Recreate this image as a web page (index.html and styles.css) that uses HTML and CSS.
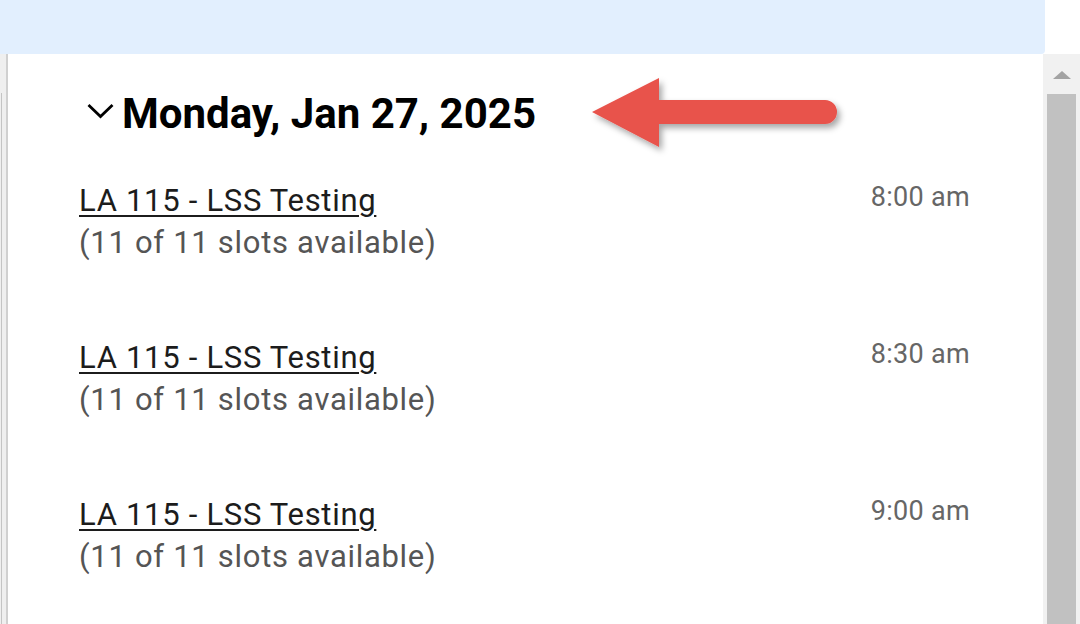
FILE: index.html
```html
<!DOCTYPE html>
<html>
<head>
<meta charset="utf-8">
<link rel="stylesheet" href="styles.css">
</head>
<body>
<div class="page">
  <div class="topbar-row">
    <div class="topbar"></div>
  </div>
  <div class="main">
    <div class="leftedge"><div class="edge-line"></div></div>
    <div class="content">
      <div class="day-header">
        <svg class="chevron" width="27" height="16" viewBox="0 0 27 16"><path d="M1.5 2 L13.5 13.5 L25.5 2" fill="none" stroke="#000" stroke-width="2.8"/></svg>
        <h2 class="day-title">Monday, Jan 27, 2025</h2>
        <svg class="callout-arrow" width="262" height="90" viewBox="0 0 262 90">
          <defs>
            <filter id="sh" x="-10%" y="-30%" width="130%" height="170%">
              <feDropShadow dx="3" dy="4" stdDeviation="3" flood-color="#000" flood-opacity="0.35"/>
            </filter>
          </defs>
          <g filter="url(#sh)">
            <path d="M2 38 L69 4 L69 26 L235 26 A12 12 0 0 1 235 50 L69 50 L69 73 Z" fill="#e8524b"/>
          </g>
        </svg>
      </div>
      <div class="slot">
        <div class="slot-info">
          <a class="slot-link" href="#">LA 115 - LSS Testing</a>
          <div class="slot-avail">(11 of 11 slots available)</div>
        </div>
        <div class="slot-time">8:00 am</div>
      </div>
      <div class="slot">
        <div class="slot-info">
          <a class="slot-link" href="#">LA 115 - LSS Testing</a>
          <div class="slot-avail">(11 of 11 slots available)</div>
        </div>
        <div class="slot-time">8:30 am</div>
      </div>
      <div class="slot">
        <div class="slot-info">
          <a class="slot-link" href="#">LA 115 - LSS Testing</a>
          <div class="slot-avail">(11 of 11 slots available)</div>
        </div>
        <div class="slot-time">9:00 am</div>
      </div>
    </div>
    <div class="scrollbar">
      <div class="scroll-up"></div>
      <div class="scroll-thumb"></div>
    </div>
  </div>
</div>
</body>
</html>
```

FILE: styles.css
```css
html, body {
  margin: 0;
  padding: 0;
  background: #fff;
}
body {
  font-family: Roboto, "Liberation Sans", sans-serif;
  width: 1080px;
  height: 624px;
  overflow: hidden;
}
.page {
  display: flex;
  flex-direction: column;
  height: 624px;
}
.topbar-row {
  display: flex;
  height: 54px;
  flex: none;
}
.topbar {
  width: 1045px;
  height: 54px;
  background: #e2effe;
  border-bottom-right-radius: 4px;
}
.main {
  display: flex;
  flex: 1;
  min-height: 0;
  overflow: hidden;
}
.leftedge {
  width: 8px;
  flex: none;
  background: #efefef;
  border-right: 2px solid #d0d0d0;
  box-sizing: border-box;
  display: flex;
  flex-direction: column;
}
.edge-line {
  margin-top: 39px;
  margin-left: 1px;
  width: 1px;
  flex: 1;
  background: #c4c4c4;
}
.content {
  flex: 1;
  padding: 36px 73px 0 71px;
  overflow: hidden;
}
.day-header {
  display: flex;
  align-items: center;
  height: 48px;
  padding-left: 8px;
  position: relative;
}
.chevron {
  margin-right: 8px;
  margin-top: -7px;
}
.day-title {
  margin: 0;
  font-size: 42px;
  line-height: 48px;
  font-weight: 700;
  color: #000;
}
.callout-arrow {
  position: absolute;
  left: 511px;
  top: -16px;
}
.day-header + .slot {
  margin-top: 43px;
}
.slot {
  display: flex;
  justify-content: space-between;
  align-items: flex-start;
  height: 157px;
}
.slot-info {
  display: flex;
  flex-direction: column;
}
.slot-link {
  font-size: 31px;
  line-height: 40px;
  letter-spacing: 0.7px;
  color: #1c1c1c;
  text-decoration: underline;
  text-decoration-thickness: 2px;
  text-underline-offset: 4px;
}
.slot-avail {
  font-size: 31px;
  line-height: 40px;
  letter-spacing: 0.7px;
  color: #555;
  margin-top: 2px;
}
.slot-time {
  font-size: 27px;
  letter-spacing: 0.3px;
  color: #666;
}
.scrollbar {
  width: 37px;
  flex: none;
  background: #f1f1f1;
  display: flex;
  flex-direction: column;
  align-items: center;
}
.scroll-up {
  width: 0;
  height: 0;
  border-left: 9px solid transparent;
  border-right: 9px solid transparent;
  border-bottom: 8px solid #a3a3a3;
  margin-top: 17px;
  margin-bottom: 15px;
  margin-left: 1px;
}
.scroll-thumb {
  width: 29px;
  flex: 1;
  background: #c1c1c1;
}
```
